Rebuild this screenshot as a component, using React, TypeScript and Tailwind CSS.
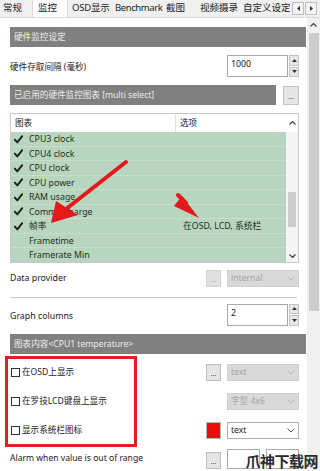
import React from 'react';

const font = { fontFamily: '"Noto Sans", "Noto Sans CJK SC", sans-serif' };

function SectionHeader({ text, className = '' }: { text: string; className?: string }) {
  return (
    <div className={`h-[20px] bg-[#808080] text-[#ececec] text-[8.6px] flex items-center pl-[4px] whitespace-nowrap ${className}`}>
      {text}
    </div>
  );
}

function DotsButton({ disabled = false }: { disabled?: boolean }) {
  return (
    <div
      className={`w-[15px] h-[17px] border flex items-end justify-center pb-[3px] text-[7px] leading-none ${
        disabled ? 'bg-[#e0e0e0] border-[#d4d4d4] text-[#a8a8a8]' : 'bg-[#e5e5e5] border-[#bdbdbd] text-[#444]'
      }`}
    >
      ...
    </div>
  );
}

function Spinbox({ value }: { value: string }) {
  return (
    <div className="flex h-[22px] w-[72px]">
      <div className="flex-1 border border-[#a8a8a8] bg-white text-[8.8px] text-[#222] pl-[3px] pt-[4px] leading-none">
        {value}
      </div>
      <div className="w-[10px] flex flex-col gap-[1px] ml-[1px]">
        <div className="flex-1 bg-[#e6e6e6] border border-[#c4c4c4] flex items-center justify-center">
          <svg width="5" height="3" viewBox="0 0 5 3"><path d="M0 3 L2.5 0 L5 3Z" fill="#333" /></svg>
        </div>
        <div className="flex-1 bg-[#e6e6e6] border border-[#c4c4c4] flex items-center justify-center">
          <svg width="5" height="3" viewBox="0 0 5 3"><path d="M0 0 L2.5 3 L5 0Z" fill="#333" /></svg>
        </div>
      </div>
    </div>
  );
}

function Chevron({ color }: { color: string }) {
  return (
    <svg width="8" height="5" viewBox="0 0 8 5">
      <path d="M0.5 0.5 L4 4 L7.5 0.5" fill="none" stroke={color} strokeWidth="1" />
    </svg>
  );
}

function Select({ text, disabled = true }: { text: string; disabled?: boolean }) {
  return (
    <div
      className={`w-[72px] h-[17px] border flex items-center justify-between px-[3px] text-[8.6px] whitespace-nowrap ${
        disabled ? 'bg-[#d9d9d9] border-[#d0d0d0] text-[#a4a4a4]' : 'bg-white border-[#b0b0b0] text-[#222]'
      }`}
    >
      <span>{text}</span>
      <Chevron color={disabled ? '#b8b8b8' : '#555'} />
    </div>
  );
}

function Check() {
  return (
    <svg width="9" height="9" viewBox="0 0 9 9">
      <path d="M0.8 4.6 L3.3 7.4 L8.2 1.2" fill="none" stroke="#1c1c1c" strokeWidth="1.9" strokeLinejoin="round" strokeLinecap="round" />
    </svg>
  );
}

function CheckBoxRow({ label }: { label: string }) {
  return (
    <div className="h-[15px] flex items-center gap-[2px] text-[8.6px] text-[#222] whitespace-nowrap">
      <div className="w-[9px] h-[9px] border border-[#333] bg-white" />
      <span>{label}</span>
    </div>
  );
}

const rows: { name: string; checked?: boolean; opt?: string }[] = [
  { name: 'CPU3 clock', checked: true },
  { name: 'CPU4 clock', checked: true },
  { name: 'CPU clock', checked: true },
  { name: 'CPU power', checked: true },
  { name: 'RAM usage', checked: true },
  { name: 'Commit charge', checked: true },
  { name: '帧率', checked: true, opt: '在OSD, LCD, 系统栏' },
  { name: 'Frametime' },
  { name: 'Framerate Min' },
];

const tabs = [
  { label: '常规', w: 'w-[32px] pl-[3px]' },
  { label: '监控', w: 'w-[36px] pl-[5px]' },
  { label: 'OSD显示', w: 'w-[44px] pl-[4px] tracking-[-0.2px]' },
  { label: 'Benchmark', w: 'w-[51px] pl-[3px] tracking-[-0.4px]' },
  { label: '截图', w: 'w-[32px] pl-[3px]' },
  { label: '视频摄录', w: 'w-[46px] pl-[5px]' },
  { label: '自定义设定', w: 'w-[49px] pl-[2px]' },
];

export default function App() {
  return (
    <div className="relative w-[320px] h-[471px] overflow-hidden bg-[#f0f0f0]" style={font}>
      {/* Tab bar */}
      <div className="h-[18px] flex items-end text-[9.5px] text-[#222] border-b border-[#dadada]">
        <div className="flex items-end h-full">
          {tabs.map((t, i) => (
            <div
              key={t.label}
              className={`h-full shrink-0 flex items-center whitespace-nowrap overflow-hidden ${t.w} ${
                i === 1 ? 'bg-white border-x border-[#dadada]' : ''
              }`}
            >
              {t.label}
            </div>
          ))}
        </div>
        <div className="flex gap-[1px] ml-auto mr-[3px] mb-[2px]">
          <div className="w-[12px] h-[13px] border border-[#c0c0c0] bg-[#f4f4f4] flex items-center justify-center">
            <svg width="3" height="5" viewBox="0 0 3 5"><path d="M3 0 L0 2.5 L3 5Z" fill="#333" /></svg>
          </div>
          <div className="w-[12px] h-[13px] border border-[#c0c0c0] bg-[#f4f4f4] flex items-center justify-center">
            <svg width="3" height="5" viewBox="0 0 3 5"><path d="M0 0 L3 2.5 L0 5Z" fill="#333" /></svg>
          </div>
        </div>
      </div>

      {/* Body */}
      <div className="flex h-[453px]">
        <div className="flex-1 bg-white pl-[10px] pr-[1px] pt-[9px]">
          <SectionHeader text="硬件监控设定" />

          <div className="flex items-center justify-between mt-[8px] mr-[7px] h-[22px]">
            <span className="text-[8.6px] text-[#222] mt-[3px]">硬件存取间隔 (毫秒)</span>
            <Spinbox value="1000" />
          </div>

          <div className="flex items-start mt-[8px] mr-[7px]">
            <SectionHeader text="已启用的硬件监控图表 [multi select]" className="flex-1" />
            <div className="ml-[7px] mt-[1px] w-[16px] h-[19px] bg-[#e5e5e5] border border-[#c4c4c4] flex items-end justify-center pb-[4px] text-[7px] leading-none text-[#444]">
              ...
            </div>
          </div>

          {/* List */}
          <div className="mt-[8px] mr-[7px] h-[150px] border border-[#c8c8c8] flex flex-col">
            <div className="h-[18px] flex text-[8.6px] text-[#222] bg-white">
              <div className="w-[165px] pl-[4px] flex items-center border-r border-[#e0e0e0]">图表</div>
              <div className="flex-1 pl-[4px] flex items-center">选项</div>
              <div className="w-[12px] flex items-center justify-center">
                <svg width="7" height="4" viewBox="0 0 7 4"><path d="M0.5 3.5 L3.5 0.5 L6.5 3.5" fill="none" stroke="#444" strokeWidth="1.2" /></svg>
              </div>
            </div>
            <div className="flex-1 flex overflow-hidden">
              <div className="flex-1 flex flex-col bg-[#b8d6bf]">
                {rows.map((r) => (
                  <div key={r.name} className="h-[14.5px] shrink-0 flex items-center text-[8.8px] leading-[14px] text-[#1e2e22] border-b border-[#c6dfcc] pt-[1px]">
                    <div className="w-[18px] pl-[3px] flex items-center">{r.checked && <Check />}</div>
                    <div className="w-[154px]">{r.name}</div>
                    <div className="whitespace-nowrap">{r.opt}</div>
                  </div>
                ))}
              </div>
              <div className="w-[12px] bg-[#f5f5f5] flex flex-col items-center">
                <div className="mt-[60px] w-[8px] h-[35px] bg-[#cdcdcd]" />
                <div className="mt-auto mb-[4px]">
                  <svg width="7" height="4" viewBox="0 0 7 4"><path d="M0.5 0.5 L3.5 3.5 L6.5 0.5" fill="none" stroke="#444" strokeWidth="1.2" /></svg>
                </div>
              </div>
            </div>
          </div>

          <div className="flex items-center mt-[7px] mr-[7px] h-[17px]">
            <span className="text-[8.8px] text-[#222] flex-1">Data provider</span>
            <DotsButton disabled />
            <div className="ml-[6px]"><Select text="internal" /></div>
          </div>

          <div className="mt-[10px] mr-[9px] h-[1px] bg-[#c8c8c8]" />

          <div className="flex items-center justify-between mt-[6px] mr-[7px] h-[21px]">
            <span className="text-[8.8px] text-[#222] mt-[4px]">Graph columns</span>
            <Spinbox value="2" />
          </div>

          <SectionHeader text="图表内容<CPU1 temperature>" className="mt-[9px]" />

          <div className="relative flex mr-[7px]">
            <div className="absolute left-[-5px] top-[2px] w-[132px] h-[91px] border-[3px] border-[#e0201c]" />
            <div className="flex-1 flex flex-col pt-[11px] gap-[14px] pl-[1px]">
              <CheckBoxRow label="在OSD上显示" />
              <CheckBoxRow label="在罗技LCD键盘上显示" />
              <CheckBoxRow label="显示系统栏图标" />
            </div>
            <div className="flex flex-col pt-[10px] gap-[12px]">
              <div className="flex items-center">
                <DotsButton />
                <div className="ml-[6px]"><Select text="text" /></div>
              </div>
              <div className="flex items-center justify-end">
                <Select text="字型 4x6" />
              </div>
              <div className="flex items-center">
                <div className="w-[15px] h-[17px] bg-[#f00c0c] border border-[#b8b8b8]" />
                <div className="ml-[6px]"><Select text="text" disabled={false} /></div>
              </div>
            </div>
          </div>

          <div className="flex items-start mt-[10px] mr-[7px]">
            <span className="text-[8.6px] text-[#222] flex-1 mt-[3px] whitespace-nowrap">Alarm when value is out of range</span>
            <div className="mt-[3px]"><DotsButton /></div>
            <div className="ml-[6px] w-[33px] h-[20px] border border-[#a8a8a8] bg-white" />
            <div className="ml-[6px] w-[33px] h-[20px] border border-[#a8a8a8] bg-white" />
          </div>
        </div>

        {/* Page scrollbar */}
        <div className="w-[13px] bg-[#f0f0f0] flex flex-col items-center">
          <div className="mt-[5px]">
            <svg width="7" height="4" viewBox="0 0 7 4"><path d="M0.5 3.5 L3.5 0.5 L6.5 3.5" fill="none" stroke="#444" strokeWidth="1.2" /></svg>
          </div>
          <div className="mt-[6px] w-[10px] h-[278px] bg-[#cdcdcd]" />
        </div>
      </div>

      {/* Annotation arrows */}
      <svg className="absolute inset-0 pointer-events-none" width="320" height="471" viewBox="0 0 320 471">
        <line x1="126" y1="162" x2="66" y2="209" stroke="#e3191b" strokeWidth="4" strokeLinecap="round" />
        <path d="M51 223 L56 201 L78 215 Z" fill="#e3191b" />
        <path d="M182 196 L174 206 L199 218 Z" fill="#e3191b" />
        <line x1="178" y1="195" x2="186" y2="203" stroke="#e3191b" strokeWidth="4" strokeLinecap="round" />
      </svg>

      {/* Watermark */}
      <div
        className="absolute right-[2px] bottom-[3px] text-[15px] font-bold text-[#2a2a2a] leading-none tracking-[-0.5px]"
        style={{ fontFamily: '"Noto Sans CJK SC", sans-serif' }}
      >
        爪神下载网
      </div>
    </div>
  );
}
